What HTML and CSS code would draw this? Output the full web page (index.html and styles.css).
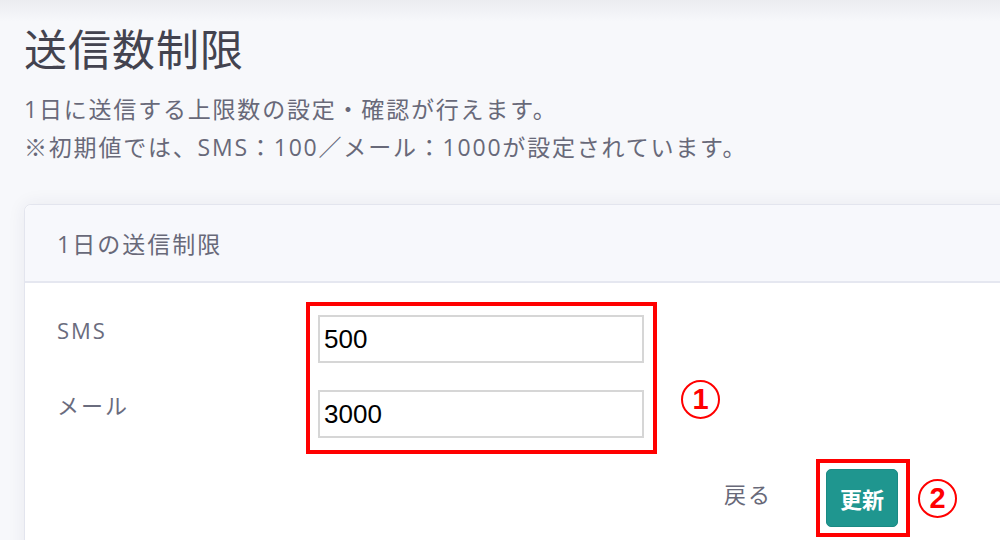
FILE: index.html
```html
<!DOCTYPE html>
<html lang="ja">
<head>
    <meta charset="UTF-8">
    <meta name="viewport" content="width=device-width, initial-scale=1.0">
    <title>送信数制限</title>
    <link rel="stylesheet" href="styles.css">
</head>
<body>
    <div class="page">
        <h1 class="title">送信数制限</h1>
        <p class="lead">1日に送信する上限数の設定・確認が行えます。<br>※初期値では、SMS：100／メール：1000が設定されています。</p>

        <div class="card">
            <div class="card-header">1日の送信制限</div>
            <div class="card-body">
                <div class="form-area">
                    <div class="labels">
                        <label for="sms">SMS</label>
                        <label for="mail">メール</label>
                    </div>
                    <div class="mark-box fields">
                        <input type="text" id="sms" value="500">
                        <input type="text" id="mail" value="3000">
                    </div>
                    <span class="num-mark num-one">1</span>
                </div>
                <div class="card-footer">
                    <a href="#" class="back">戻る</a>
                    <span class="mark-box btn-box">
                        <button type="button" class="btn-update">更新</button>
                    </span>
                    <span class="num-mark">2</span>
                </div>
            </div>
        </div>
    </div>
</body>
</html>
```

FILE: styles.css
```css
html, body {
    margin: 0;
    padding: 0;
    overflow: hidden;
}
body {
    font-family: "Open Sans", "Noto Sans CJK JP", sans-serif;
    background: linear-gradient(#ebecf0 0, #f7f8fb 22px) no-repeat, #f7f8fb;
    height: 540px;
}
.page {
    padding: 24px 0 0 24px;
}
.title {
    margin: 0;
    font-size: 43px;
    font-weight: 400;
    line-height: 52px;
    letter-spacing: 1px;
    color: #43434f;
}
.lead {
    margin: 14px 0 0;
    font-size: 23px;
    line-height: 38px;
    letter-spacing: 1.8px;
    color: #686979;
}
.card {
    width: 1040px;
    margin-top: 38px;
    background-color: #fff;
    border: 1px solid #e3e5ee;
    border-radius: 7px;
    box-shadow: 0 0 18px rgba(40, 45, 80, 0.07);
}
.card-header {
    height: 76px;
    padding: 0 32px;
    display: flex;
    align-items: center;
    background-color: #f7f8fc;
    border-bottom: 2px solid #e5e7f0;
    border-radius: 7px 7px 0 0;
    font-size: 23px;
    letter-spacing: 2px;
    color: #686979;
}
.card-body {
    padding: 19px 32px 40px;
}
.form-area {
    display: flex;
    align-items: flex-start;
}
.labels {
    width: 249px;
    display: flex;
    flex-direction: column;
    gap: 45px;
    padding-top: 13px;
}
.labels label {
    font-size: 22px;
    line-height: 30px;
    letter-spacing: 2px;
    color: #6a6c7e;
}
.mark-box {
    border: 4px solid #ff0000;
}
.fields {
    display: flex;
    flex-direction: column;
    gap: 27px;
    padding: 9px 9px 12px 8px;
}
.fields input {
    width: 326px;
    height: 48px;
    box-sizing: border-box;
    padding: 0 4px;
    border: 2px solid #d6d6d6;
    border-radius: 0;
    font-family: "Liberation Sans", Arial, sans-serif;
    font-size: 26px;
    color: #000;
    outline: none;
}
.num-mark {
    width: 39px;
    height: 39px;
    box-sizing: border-box;
    border: 2px solid #ff0000;
    border-radius: 50%;
    display: inline-flex;
    align-items: center;
    justify-content: center;
    font-family: "Liberation Sans", Arial, sans-serif;
    font-size: 29px;
    font-weight: 700;
    color: #ff0000;
    line-height: 1;
}
.num-one {
    margin: 78px 0 0 24px;
}
.card-footer {
    display: flex;
    align-items: center;
    margin-top: 5px;
    padding-left: 667px;
}
.back {
    font-size: 22px;
    letter-spacing: 2px;
    color: #686979;
    text-decoration: none;
    margin: 0 44px 10px 0;
}
.btn-box {
    display: inline-flex;
    padding: 6px 8px 6px 6px;
}
.btn-update {
    width: 72px;
    height: 58px;
    padding: 0;
    border: 1px solid #1a8a84;
    border-radius: 5px;
    background-color: #1f968f;
    color: #fff;
    font-family: "Noto Sans CJK JP", sans-serif;
    font-size: 22px;
    font-weight: 700;
    cursor: pointer;
}
.btn-box + .num-mark {
    margin-left: 8px;
}
```
